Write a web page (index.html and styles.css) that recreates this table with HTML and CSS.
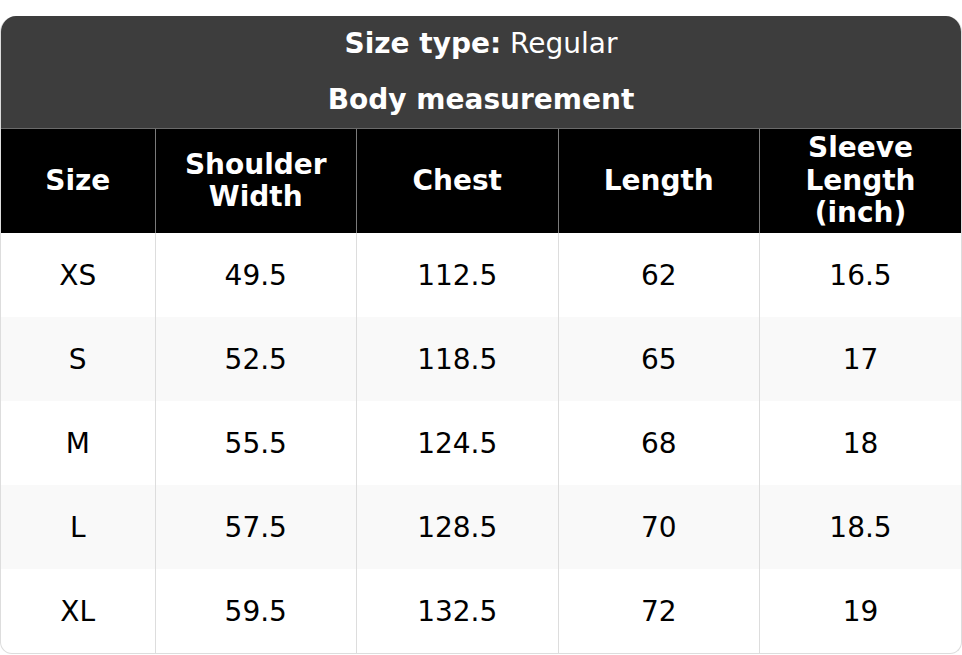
FILE: index.html
```html
<!DOCTYPE html>
<html>
<head>
<meta charset="utf-8">
<link rel="stylesheet" href="styles.css">
</head>
<body>
<div class="chart">
  <div class="title">
    <div class="title-line"><b>Size type:</b> Regular</div>
    <div class="title-line strong">Body measurement</div>
  </div>
  <table class="sizes">
    <colgroup>
      <col class="c-size"><col class="c-val"><col class="c-val"><col class="c-val"><col class="c-val">
    </colgroup>
    <thead>
      <tr><th>Size</th><th>Shoulder<br>Width</th><th>Chest</th><th>Length</th><th>Sleeve<br>Length<br>(inch)</th></tr>
    </thead>
    <tbody>
      <tr><td>XS</td><td>49.5</td><td>112.5</td><td>62</td><td>16.5</td></tr>
      <tr><td>S</td><td>52.5</td><td>118.5</td><td>65</td><td>17</td></tr>
      <tr><td>M</td><td>55.5</td><td>124.5</td><td>68</td><td>18</td></tr>
      <tr><td>L</td><td>57.5</td><td>128.5</td><td>70</td><td>18.5</td></tr>
      <tr><td>XL</td><td>59.5</td><td>132.5</td><td>72</td><td>19</td></tr>
    </tbody>
  </table>
</div>
</body>
</html>
```
FILE: styles.css
```css
html, body {
  margin: 0;
  padding: 0;
  background: #ffffff;
}
body {
  padding-top: 16px;
  font-family: "DejaVu Sans", sans-serif;
}
.chart {
  width: 962px;
  border-radius: 16px 16px 12px 12px;
  overflow: hidden;
  border: 1px solid #dddddd;
  border-top: none;
  box-sizing: border-box;
}
.title {
  background: #3d3d3d;
  color: #ffffff;
  text-align: center;
  height: 113px;
  box-sizing: border-box;
  border-bottom: 1px solid #6a6a6a;
}
.title-line {
  font-size: 28px;
  line-height: 55px;
  height: 56px;
}
.title-line.strong {
  font-weight: bold;
}
.sizes {
  width: 100%;
  border-collapse: collapse;
  table-layout: fixed;
}
.c-size { width: 154px; }
.sizes th {
  background: #000000;
  color: #ffffff;
  font-size: 28px;
  font-weight: bold;
  line-height: 32.5px;
  height: 104px;
  padding: 0 4px;
  text-align: center;
  vertical-align: middle;
  border-left: 1px solid #7a7a7a;
  box-sizing: border-box;
}
.sizes th:first-child { border-left: none; }
.sizes td {
  font-size: 28px;
  color: #000000;
  text-align: center;
  vertical-align: middle;
  height: 84px;
  padding: 0;
  border-left: 1px solid #dddddd;
  box-sizing: border-box;
}
.sizes td:first-child { border-left: none; }
.sizes tbody tr:nth-child(even) td { background: #f9f9f9; }
```
